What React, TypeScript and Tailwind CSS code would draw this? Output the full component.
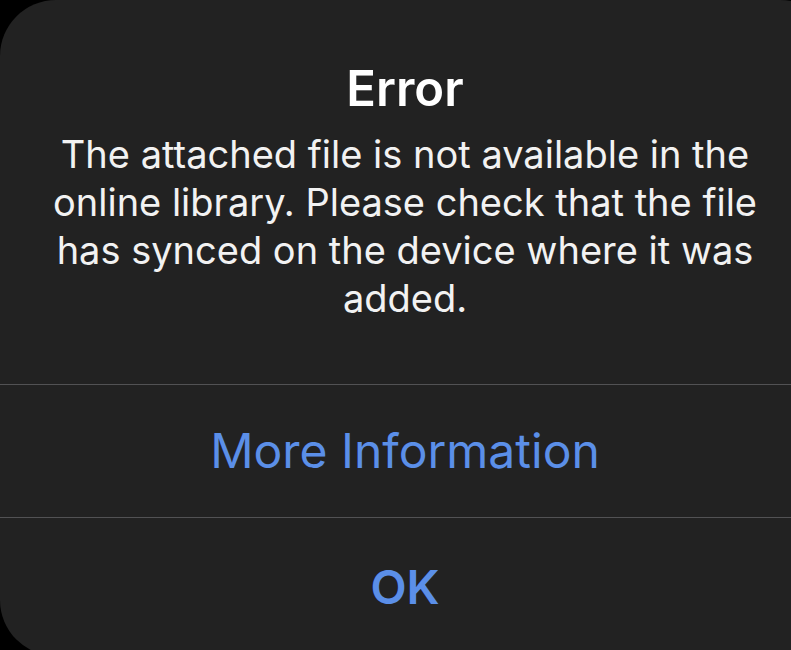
export default function App() {
  return (
    <div className="w-[791px] h-[650px] overflow-hidden bg-black" style={{ fontFamily: 'Inter, "Noto Sans", sans-serif' }}>
      <div className="w-[836px] h-[656px] rounded-[56px] bg-[#222222] flex flex-col pr-[26px]">
        {/* Message */}
        <div className="h-[384px] flex flex-col items-center pt-[61px] text-center">
          <h1 className="text-[49px] leading-[56px] font-semibold text-white">Error</h1>
          <p className="mt-[13px] text-[38px] leading-[48px] text-[#f2f2f2] whitespace-nowrap">
            The attached file is not available in the
            <br />
            online library. Please check that the file
            <br />
            has synced on the device where it was
            <br />
            added.
          </p>
        </div>

        {/* Actions */}
        <div className="h-px bg-[#525254] -mr-[26px]" />
        <button className="h-[132px] flex items-center justify-center text-[48px] text-[#5b8fe8]">
          More Information
        </button>
        <div className="h-px bg-[#525254] -mr-[26px]" />
        <button className="flex-1 flex items-center justify-center text-[47px] font-semibold text-[#5b8fe8]">
          OK
        </button>
      </div>
    </div>
  )
}
